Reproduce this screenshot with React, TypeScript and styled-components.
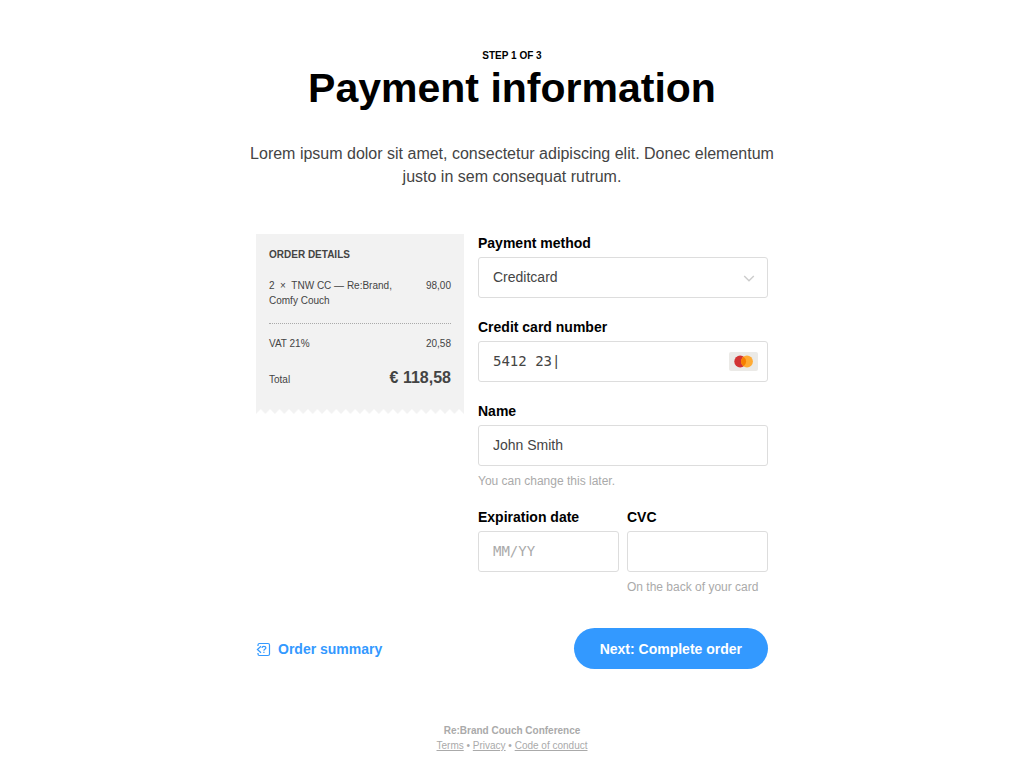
import React from "react";
import styled, { createGlobalStyle } from "styled-components";

const GlobalStyle = createGlobalStyle`
  *, *::before, *::after { box-sizing: border-box; }
  body {
    margin: 0;
    background: #fff;
    color: #444;
    font-family: "Liberation Sans", Arial, sans-serif;
  }
`;

const BLUE = "#3399ff";

const Page = styled.main`
  width: 100%;
  max-width: 544px;
  margin: 0 auto;
  padding: 48px 16px 22px;
`;

const Header = styled.header`
  margin: 0 -8px;
  text-align: center;
`;

const Step = styled.p`
  margin: 0;
  color: #000;
  font-size: 10px;
  font-weight: bold;
  line-height: 16px;
  text-transform: uppercase;
`;

const Title = styled.h1`
  margin: 0;
  color: #000;
  font-size: 41px;
  line-height: 48px;
`;

const Intro = styled.p`
  margin: 30px 0 0;
  font-size: 16px;
  line-height: 23px;
`;

const Columns = styled.div`
  display: grid;
  grid-template-columns: 208px 1fr;
  align-items: start;
  gap: 14px;
  margin-top: 45px;
`;

const Receipt = styled.aside`
  margin-top: 1px;
`;

const ReceiptBody = styled.div`
  padding: 12px 13px 21px;
  background: #f2f2f2;
  font-size: 10px;
  line-height: 15px;
`;

const ReceiptTitle = styled.h2`
  margin: 0 0 15px;
  font-size: 10px;
  line-height: 17px;
  text-transform: uppercase;
`;

const ReceiptRow = styled.div`
  display: flex;
  justify-content: space-between;
  align-items: baseline;
`;

const ItemName = styled.span`
  width: 130px;
  white-space: pre-wrap;
`;

const Rule = styled.hr`
  margin: 15px 0 12px;
  border: 0;
  border-top: 1px dotted #aaa;
`;

const TotalRow = styled(ReceiptRow)`
  margin-top: 17px;
`;

const Total = styled.strong`
  font-size: 16px;
  line-height: 20px;
`;

const TornEdge = styled.svg`
  display: block;
  width: 100%;
  height: 5px;
`;

const Fields = styled.div`
  display: grid;
  gap: 19px;
`;

const FieldPair = styled.div`
  display: grid;
  grid-template-columns: 1fr 1fr;
  gap: 8px;
`;

const FieldBox = styled.div`
  min-width: 0;
`;

const Label = styled.label`
  display: block;
  margin-bottom: 4px;
  color: #000;
  font-size: 14px;
  font-weight: bold;
  line-height: 20px;
`;

const Control = styled.div`
  display: flex;
  align-items: center;
  height: 41px;
  padding-right: 9px;
  border: 1px solid #ddd;
  border-radius: 3px;
  background: #fff;
`;

const controlText = `
  flex: 1;
  min-width: 0;
  width: 100%;
  height: 39px;
  padding: 0 14px 2px;
  border: 0;
  outline: 0;
  background: transparent;
  color: #444;
  font-size: 14px;
  appearance: none;
`;

const Input = styled.input<{ $mono?: boolean }>`
  ${controlText}
  font-family: ${(p) => (p.$mono ? '"DejaVu Sans Mono", monospace' : "inherit")};
  &::placeholder { color: #aaa; opacity: 1; }
`;

const Select = styled.select`
  ${controlText}
  font-family: inherit;
`;

const Chevron = styled.svg`
  flex: none;
  width: 18px;
  height: 16px;
  pointer-events: none;
`;

const CardLogo = styled.svg`
  flex: none;
  width: 29px;
  height: 19px;
`;

const Hint = styled.p`
  margin: 8px 0 0;
  color: #aaa;
  font-size: 12px;
  line-height: 14px;
`;

const Actions = styled.div`
  display: flex;
  justify-content: space-between;
  align-items: center;
  margin-top: 34px;
`;

const SummaryLink = styled.a`
  display: flex;
  align-items: center;
  gap: 6px;
  color: ${BLUE};
  font-size: 14px;
  font-weight: bold;
  line-height: 20px;
  text-decoration: none;
`;

const SummaryIcon = styled.svg`
  width: 16px;
  height: 16px;
`;

const NextButton = styled.button`
  height: 41px;
  padding: 0 26px;
  border: 0;
  border-radius: 21px;
  background: ${BLUE};
  color: #fff;
  font: bold 14px "Liberation Sans", Arial, sans-serif;
`;

const Footer = styled.footer`
  margin-top: 54px;
  color: #aaa;
  font-size: 10px;
  line-height: 15px;
  text-align: center;
`;

const FooterLink = styled.a`
  color: inherit;
`;

interface FieldProps {
  id: string;
  label: string;
  hint?: string;
  children: React.ReactNode;
}

const Field = ({ id, label, hint, children }: FieldProps) => (
  <FieldBox>
    <Label htmlFor={id}>{label}</Label>
    <Control>{children}</Control>
    {hint && <Hint>{hint}</Hint>}
  </FieldBox>
);

export default function App() {
  return (
    <>
      <GlobalStyle />
      <Page>
        <Header>
          <Step>Step 1 of 3</Step>
          <Title>Payment information</Title>
          <Intro>
            Lorem ipsum dolor sit amet, consectetur adipiscing elit. Donec elementum justo in sem
            consequat rutrum.
          </Intro>
        </Header>

        <form onSubmit={(e) => e.preventDefault()}>
          <Columns>
            <Receipt>
              <ReceiptBody>
                <ReceiptTitle>Order details</ReceiptTitle>
                <ReceiptRow>
                  <ItemName>{"2  ×  TNW CC — Re:Brand, Comfy Couch"}</ItemName>
                  <span>98,00</span>
                </ReceiptRow>
                <Rule />
                <ReceiptRow>
                  <span>VAT 21%</span>
                  <span>20,58</span>
                </ReceiptRow>
                <TotalRow>
                  <span>Total</span>
                  <Total>€ 118,58</Total>
                </TotalRow>
              </ReceiptBody>
              <TornEdge aria-hidden="true">
                <defs>
                  <pattern id="teeth" width="9.45" height="5" patternUnits="userSpaceOnUse">
                    <path d="M0 0H9.45V5L4.72 0L0 5Z" fill="#f2f2f2" />
                  </pattern>
                </defs>
                <rect width="100%" height="5" fill="url(#teeth)" />
              </TornEdge>
            </Receipt>

            <Fields>
              <Field id="method" label="Payment method">
                <Select id="method" defaultValue="Creditcard">
                  <option>Creditcard</option>
                </Select>
                <Chevron viewBox="0 0 18 16" fill="none" stroke="#ccc" strokeWidth="1.4">
                  <path d="M4.2 6L9 10.8L13.8 6" />
                </Chevron>
              </Field>
              <Field id="number" label="Credit card number">
                <Input id="number" $mono defaultValue="5412 23|" />
                <CardLogo viewBox="0 0 29 19">
                  <rect width="29" height="19" rx="2" fill="#ebeae7" />
                  <circle cx="11.2" cy="9.5" r="5.9" fill="#d23434" />
                  <circle cx="18" cy="9.5" r="5.9" fill="#ffab33" />
                  <path
                    d="M14.6 4.68A5.9 5.9 0 0 1 14.6 14.32A5.9 5.9 0 0 1 14.6 4.68Z"
                    fill="#f77f00"
                  />
                </CardLogo>
              </Field>
              <Field id="name" label="Name" hint="You can change this later.">
                <Input id="name" defaultValue="John Smith" />
              </Field>
              <FieldPair>
                <Field id="expiry" label="Expiration date">
                  <Input id="expiry" $mono placeholder="MM/YY" />
                </Field>
                <Field id="cvc" label="CVC" hint="On the back of your card">
                  <Input id="cvc" $mono />
                </Field>
              </FieldPair>
            </Fields>
          </Columns>

          <Actions>
            <SummaryLink href="#summary">
              <SummaryIcon viewBox="0 0 16 16" fill="none" stroke={BLUE} strokeWidth="1.2">
                <path d="M2 5V4Q2 2.5 3.5 2.5H12Q13.5 2.5 13.5 4V13Q13.5 14.5 12 14.5H3.5Q2 14.5 2 13V12" />
                <path d="M5 5.2L1.4 8.5L5 11.8" />
                <path d="M6 7Q6 5.3 7.9 5.3Q9.9 5.3 9.9 6.8Q9.9 7.7 8.8 8.2Q7.9 8.7 7.9 9.7M7.9 10.7V11.9" />
              </SummaryIcon>
              Order summary
            </SummaryLink>
            <NextButton type="submit">Next: Complete order</NextButton>
          </Actions>
        </form>

        <Footer>
          <strong>Re:Brand Couch Conference</strong>
          <div>
            <FooterLink href="#terms">Terms</FooterLink> •{" "}
            <FooterLink href="#privacy">Privacy</FooterLink> •{" "}
            <FooterLink href="#conduct">Code of conduct</FooterLink>
          </div>
        </Footer>
      </Page>
    </>
  );
}
